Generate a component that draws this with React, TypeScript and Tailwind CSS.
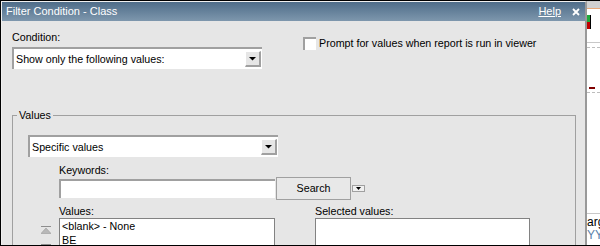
import React from "react";

function DropArrow() {
  return (
    <svg width="7" height="4" viewBox="0 0 7 4">
      <polygon points="0,0 7,0 3.5,3.5" fill="#000" />
    </svg>
  );
}

function ComboBox({ value }: { value: string }) {
  return (
    <div className="w-[250px] h-[22px] bg-white border-t-2 border-l-2 border-[#a0a0a0] flex items-center">
      <span className="pl-[2px] leading-[13px]">{value}</span>
      <div className="ml-auto mr-[1px] w-[16px] h-[16px] bg-[#e6e6e6] border-t border-l border-white border-r-2 border-b-2 border-r-[#a0a0a0] border-b-[#a0a0a0] flex items-center justify-center">
        <DropArrow />
      </div>
    </div>
  );
}

function MoveTopIcon() {
  return (
    <svg width="10" height="8" viewBox="0 0 10 8">
      <rect x="0" y="0" width="10" height="1" fill="#8e8e8e" />
      <polygon points="5,2 10,7.5 0,7.5" fill="#b8b8b8" stroke="#9a9a9a" strokeWidth="0.6" />
    </svg>
  );
}

export default function App() {
  return (
    <div className="w-[600px] h-[246px] overflow-hidden flex border-l border-t border-b border-black bg-white text-black font-['Liberation_Sans',Arial,sans-serif] text-[10.7px] leading-[13px]">
      {/* dialog */}
      <div className="w-[586px] h-full flex flex-col border-l border-t border-l-[#f0f0f0] border-t-[#f0f0f0] border-r-2 border-r-[#999999] bg-[#e6e6e6]">
        {/* title bar */}
        <div className="h-[19px] shrink-0 flex items-center pl-[4px] pr-[5px] text-white bg-gradient-to-b from-[#4f6d89] to-[#7e97ad]">
          <span className="text-[11px]">Filter Condition - Class</span>
          <span className="ml-auto underline text-[11px]">Help</span>
          <svg className="ml-[11px]" width="8" height="8" viewBox="0 0 8 8">
            <path d="M1 1 L7 7 M7 1 L1 7" stroke="#fff" strokeWidth="1.8" />
          </svg>
        </div>

        {/* body */}
        <div className="flex-1 pl-[10px] pt-[10px]">
          <div className="flex items-start">
            <div className="w-[250px] flex flex-col">
              <span>Condition:</span>
              <div className="mt-[3px]">
                <ComboBox value="Show only the following values:" />
              </div>
            </div>
            <div className="ml-[41px] mt-[6px] flex items-center gap-[3px]">
              <div className="w-[13px] h-[13px] bg-white border-t-2 border-l-2 border-[#a0a0a0]" />
              <span>Prompt for values when report is run in viewer</span>
            </div>
          </div>

          <fieldset className="mt-[40px] w-[564px] h-[200px] border border-[#a0a0a0]">
            <legend className="ml-[4px] px-[2px] leading-[13px]">Values</legend>

            <div className="ml-[15px] mt-[13px]">
              <ComboBox value="Specific values" />
            </div>

            <div className="ml-[46px] mt-[7px] flex flex-col">
              <span>Keywords:</span>
              <div className="flex items-start">
                <div className="mt-[2px] w-[216px] h-[19px] bg-white border-t-2 border-l-2 border-[#a0a0a0]" />
                <button className="ml-[1px] w-[75px] h-[23px] border border-[#a0a0a0] bg-[#e8e8e8] flex items-center justify-center">
                  Search
                </button>
                <div className="ml-[1px] mt-[8px] w-[13px] h-[7px] border border-[#a0a0a0] bg-[#f0f0f0] flex items-center justify-center">
                  <svg width="5" height="3" viewBox="0 0 5 3">
                    <polygon points="0,0 5,0 2.5,3" fill="#000" />
                  </svg>
                </div>
              </div>
            </div>

            <div className="ml-[28px] mt-[5px] flex items-start">
              <div className="w-[18px] pt-[21px] flex flex-col gap-[10px]">
                <MoveTopIcon />
                <MoveTopIcon />
              </div>
              <div className="w-[216px] flex flex-col">
                <span>Values:</span>
                <div className="h-[100px] bg-white border border-[#828282] pl-[2px] leading-[14px]">
                  <div>&lt;blank&gt; - None</div>
                  <div>BE</div>
                </div>
              </div>
              <div className="ml-[40px] w-[215px] flex flex-col">
                <span>Selected values:</span>
                <div className="h-[100px] bg-white border border-[#828282]" />
              </div>
            </div>
          </fieldset>
        </div>
      </div>

      {/* background window strip */}
      <div className="flex-1 h-full flex flex-col bg-white overflow-hidden">
        <div className="h-[7px] bg-[#d0d0d0]" />
        <div className="h-px bg-[#e8a878]" />
        <div className="mt-[6px] h-[14px] w-[4px] flex flex-col border-r border-black">
          <div className="h-[7px] bg-[#1faa3c]" />
          <div className="h-[7px] bg-[#c00000]" />
        </div>
        <div className="mt-[13px] h-px bg-[#c8c8c8]" />
        <div className="mt-[4px] border-t border-dashed border-[#bdbdbd]" />
        <div className="mt-[39px] ml-[2px] w-[6px] h-[2px] bg-[#800000]" />
        <div className="mt-[3px] border-t border-dashed border-[#bdbdbd]" />
        <div className="mt-[120px] h-px bg-[#c8c8c8]" />
        <div className="mt-[2px] whitespace-nowrap text-[12px] leading-[13px]">arg</div>
        <div className="whitespace-nowrap text-[12px] leading-[13px] text-[#5a7fa8]">YY</div>
      </div>
    </div>
  );
}
